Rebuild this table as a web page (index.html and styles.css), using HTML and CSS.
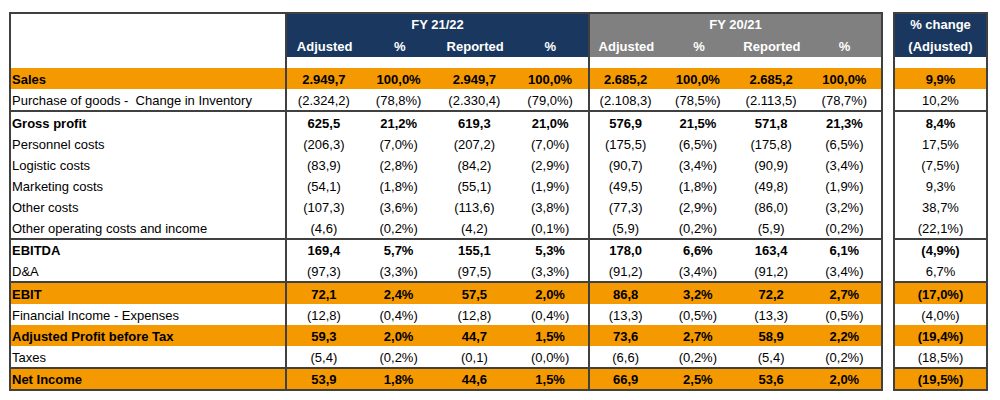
FILE: index.html
```html
<!DOCTYPE html>
<html lang="en">
<head>
<meta charset="utf-8">
<title>P&amp;L summary</title>
<link rel="stylesheet" href="styles.css">
</head>
<body>
<div class="report">
  <div class="main">
    <div class="head">
      <div class="head-label"></div>
      <div class="grp navy fy">
        <div class="grp-title">FY 21/22</div>
        <div class="sub">Adjusted</div><div class="sub">%</div><div class="sub">Reported</div><div class="sub">%</div>
      </div>
      <div class="grp gray fy">
        <div class="grp-title">FY 20/21</div>
        <div class="sub">Adjusted</div><div class="sub">%</div><div class="sub">Reported</div><div class="sub">%</div>
      </div>
    </div>
    <div class="row spacer"><div></div><div class="fy"></div><div></div><div></div><div></div><div class="fy"></div><div></div><div></div><div></div></div>

    <div class="row orange bold"><div class="lbl">Sales</div><div class="n fy">2.949,7</div><div class="n">100,0%</div><div class="n">2.949,7</div><div class="n">100,0%</div><div class="n fy">2.685,2</div><div class="n">100,0%</div><div class="n">2.685,2</div><div class="n">100,0%</div></div>
    <div class="row"><div class="lbl">Purchase of goods -&nbsp; Change in Inventory</div><div class="n fy">(2.324,2)</div><div class="n">(78,8%)</div><div class="n">(2.330,4)</div><div class="n">(79,0%)</div><div class="n fy">(2.108,3)</div><div class="n">(78,5%)</div><div class="n">(2.113,5)</div><div class="n">(78,7%)</div></div>
    <div class="row sep bold"><div class="lbl">Gross profit</div><div class="n fy">625,5</div><div class="n">21,2%</div><div class="n">619,3</div><div class="n">21,0%</div><div class="n fy">576,9</div><div class="n">21,5%</div><div class="n">571,8</div><div class="n">21,3%</div></div>
    <div class="row"><div class="lbl">Personnel costs</div><div class="n fy">(206,3)</div><div class="n">(7,0%)</div><div class="n">(207,2)</div><div class="n">(7,0%)</div><div class="n fy">(175,5)</div><div class="n">(6,5%)</div><div class="n">(175,8)</div><div class="n">(6,5%)</div></div>
    <div class="row"><div class="lbl">Logistic costs</div><div class="n fy">(83,9)</div><div class="n">(2,8%)</div><div class="n">(84,2)</div><div class="n">(2,9%)</div><div class="n fy">(90,7)</div><div class="n">(3,4%)</div><div class="n">(90,9)</div><div class="n">(3,4%)</div></div>
    <div class="row"><div class="lbl">Marketing costs</div><div class="n fy">(54,1)</div><div class="n">(1,8%)</div><div class="n">(55,1)</div><div class="n">(1,9%)</div><div class="n fy">(49,5)</div><div class="n">(1,8%)</div><div class="n">(49,8)</div><div class="n">(1,9%)</div></div>
    <div class="row"><div class="lbl">Other costs</div><div class="n fy">(107,3)</div><div class="n">(3,6%)</div><div class="n">(113,6)</div><div class="n">(3,8%)</div><div class="n fy">(77,3)</div><div class="n">(2,9%)</div><div class="n">(86,0)</div><div class="n">(3,2%)</div></div>
    <div class="row"><div class="lbl">Other operating costs and income</div><div class="n fy">(4,6)</div><div class="n">(0,2%)</div><div class="n">(4,2)</div><div class="n">(0,1%)</div><div class="n fy">(5,9)</div><div class="n">(0,2%)</div><div class="n">(5,9)</div><div class="n">(0,2%)</div></div>
    <div class="row sep bold"><div class="lbl">EBITDA</div><div class="n fy">169,4</div><div class="n">5,7%</div><div class="n">155,1</div><div class="n">5,3%</div><div class="n fy">178,0</div><div class="n">6,6%</div><div class="n">163,4</div><div class="n">6,1%</div></div>
    <div class="row"><div class="lbl">D&amp;A</div><div class="n fy">(97,3)</div><div class="n">(3,3%)</div><div class="n">(97,5)</div><div class="n">(3,3%)</div><div class="n fy">(91,2)</div><div class="n">(3,4%)</div><div class="n">(91,2)</div><div class="n">(3,4%)</div></div>
    <div class="row sep orange bold"><div class="lbl">EBIT</div><div class="n fy">72,1</div><div class="n">2,4%</div><div class="n">57,5</div><div class="n">2,0%</div><div class="n fy">86,8</div><div class="n">3,2%</div><div class="n">72,2</div><div class="n">2,7%</div></div>
    <div class="row"><div class="lbl">Financial Income - Expenses</div><div class="n fy">(12,8)</div><div class="n">(0,4%)</div><div class="n">(12,8)</div><div class="n">(0,4%)</div><div class="n fy">(13,3)</div><div class="n">(0,5%)</div><div class="n">(13,3)</div><div class="n">(0,5%)</div></div>
    <div class="row orange bold"><div class="lbl">Adjusted Profit before Tax</div><div class="n fy">59,3</div><div class="n">2,0%</div><div class="n">44,7</div><div class="n">1,5%</div><div class="n fy">73,6</div><div class="n">2,7%</div><div class="n">58,9</div><div class="n">2,2%</div></div>
    <div class="row"><div class="lbl">Taxes</div><div class="n fy">(5,4)</div><div class="n">(0,2%)</div><div class="n">(0,1)</div><div class="n">(0,0%)</div><div class="n fy">(6,6)</div><div class="n">(0,2%)</div><div class="n">(5,4)</div><div class="n">(0,2%)</div></div>
    <div class="row sep orange bold"><div class="lbl">Net Income</div><div class="n fy">53,9</div><div class="n">1,8%</div><div class="n">44,6</div><div class="n">1,5%</div><div class="n fy">66,9</div><div class="n">2,5%</div><div class="n">53,6</div><div class="n">2,0%</div></div>
  </div>

  <div class="change">
    <div class="change-head navy">
      <div class="grp-title">% change</div>
      <div class="sub">(Adjusted)</div>
    </div>
    <div class="crow spacer"></div>
    <div class="crow orange bold">9,9%</div>
    <div class="crow">10,2%</div>
    <div class="crow sep bold">8,4%</div>
    <div class="crow">17,5%</div>
    <div class="crow">(7,5%)</div>
    <div class="crow">9,3%</div>
    <div class="crow">38,7%</div>
    <div class="crow">(22,1%)</div>
    <div class="crow sep bold">(4,9%)</div>
    <div class="crow">6,7%</div>
    <div class="crow sep orange bold">(17,0%)</div>
    <div class="crow">(4,0%)</div>
    <div class="crow orange bold">(19,4%)</div>
    <div class="crow">(18,5%)</div>
    <div class="crow sep orange bold">(19,5%)</div>
  </div>
</div>
</body>
</html>
```

FILE: styles.css
```css
* {
  box-sizing: border-box;
}

body {
  margin: 0;
  background: #ffffff;
  color: #000000;
  font-family: "Liberation Sans", Arial, sans-serif;
  font-size: 13px;
}

.report {
  display: flex;
  align-items: flex-start;
  gap: 10px;
  padding: 12px 0 0 9px;
}

.main {
  width: 874px;
  border: 2px solid #404040;
}

.change {
  width: 95px;
  border: 2px solid #404040;
}

.head,
.row {
  display: grid;
  grid-template-columns: 274px repeat(4, 75.75px) repeat(4, 73.25px);
}

.head {
  height: 43px;
}

.head-label {
  background: #ffffff;
}

.grp {
  grid-column: span 4;
  display: grid;
  grid-template-columns: repeat(4, 1fr);
  grid-template-rows: 20px 23px;
  color: #ffffff;
  font-weight: bold;
}

.grp-title {
  grid-column: 1 / -1;
  display: flex;
  align-items: center;
  justify-content: center;
  color: #ffffff;
  font-weight: bold;
}

.sub {
  display: flex;
  align-items: center;
  justify-content: center;
  padding-top: 2px;
  color: #ffffff;
  font-weight: bold;
}

.navy {
  background: #1a385f;
}

.gray {
  background: #808080;
}

.fy {
  border-left: 2px solid #404040;
}

.row {
  height: 21px;
}

.row.sep,
.crow.sep {
  height: 22.5px;
  border-top: 2px solid #404040;
}

.row.spacer,
.crow.spacer {
  height: 11px;
}

.orange {
  background: #f49900;
}

.bold {
  font-weight: bold;
}

.lbl {
  display: flex;
  align-items: center;
  padding: 2px 0 0 1px;
  white-space: nowrap;
}

.n {
  display: flex;
  align-items: center;
  justify-content: center;
  padding-top: 2px;
  white-space: nowrap;
}

.change-head {
  display: grid;
  grid-template-rows: 20px 23px;
  height: 43px;
}

.crow {
  height: 21px;
  display: flex;
  align-items: center;
  justify-content: center;
  padding-top: 2px;
  white-space: nowrap;
}
```
